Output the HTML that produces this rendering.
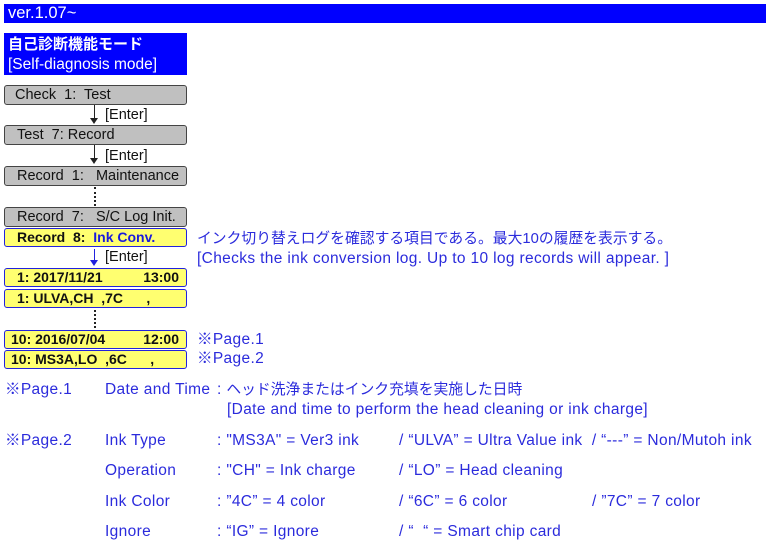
<!DOCTYPE html>
<html><head><meta charset="utf-8"><style>
body{margin:0;width:770px;height:545px;background:#fff;position:relative;overflow:hidden;font-family:"Liberation Sans","Noto Sans CJK JP",sans-serif;}
.a{position:absolute;white-space:nowrap;line-height:1;}
.b{color:#2b2bdc;font-size:15.5px;letter-spacing:0.35px;}
.j{font-size:14.8px;letter-spacing:0;}
.box{position:absolute;left:4px;width:181px;height:18px;border:1px solid #444;border-radius:3px;background:#c0c0c0;font-size:14.5px;line-height:18px;color:#111;box-sizing:content-box;}
.y{background:#ffff70;border:1.5px solid #2222dd;font-weight:bold;color:#1a1adc;height:17px;line-height:17px;font-size:14px;}
.arr{position:absolute;left:94px;width:1px;background:#222;}
.arrh{position:absolute;left:90px;width:0;height:0;border-left:4px solid transparent;border-right:4px solid transparent;border-top:6px solid #222;}
.dot{position:absolute;left:94px;width:0;border-left:2px dotted #222;}
.ent{position:absolute;left:105px;font-size:14.5px;color:#111;}
</style></head><body>
<div class="a" style="left:4px;top:4px;width:762px;height:19px;background:#0000ff;"></div>
<div class="a" style="left:8px;top:5px;color:#fff;font-size:16.5px;">ver.1.07~</div>
<div class="a" style="left:4px;top:33px;width:183px;height:42px;background:#0000ff;"></div>
<div class="a" style="left:8px;top:37px;color:#fff;font-size:15px;font-weight:bold;">自己診断機能モード</div>
<div class="a" style="left:8px;top:57px;color:#fff;font-size:15.5px;">[Self-diagnosis mode]</div>

<div class="box" style="top:85px;"><span style="margin-left:10px">Check&nbsp; 1:&nbsp; Test</span></div>
<div class="arr" style="top:105px;height:14px;"></div><div class="arrh" style="top:118px;"></div>
<div class="ent" style="top:107px;">[Enter]</div>
<div class="box" style="top:125px;"><span style="margin-left:12px">Test&nbsp; 7: Record</span></div>
<div class="arr" style="top:145px;height:14px;"></div><div class="arrh" style="top:158px;"></div>
<div class="ent" style="top:148px;">[Enter]</div>
<div class="box" style="top:166px;"><span style="margin-left:12px">Record&nbsp; 1:&nbsp;&nbsp; Maintenance</span></div>
<div class="dot" style="top:187px;height:19px;"></div>
<div class="box" style="top:207px;"><span style="margin-left:12px">Record&nbsp; 7:&nbsp;&nbsp; S/C Log Init.</span></div>
<div class="box y" style="top:228px;"><span style="margin-left:12px;color:#111">Record&nbsp; 8:</span>&nbsp; Ink Conv.</div>
<div class="arr" style="top:249px;height:12px;background:#2222dd"></div><div class="arrh" style="top:260px;border-top-color:#2222dd"></div>
<div class="ent b" style="top:249px;font-size:14.5px;letter-spacing:0">[Enter]</div>
<div class="box y" style="top:268px;color:#111;"><span style="margin-left:12px">1: 2017/11/21</span><span style="position:absolute;right:7px">13:00</span></div>
<div class="box y" style="top:289px;color:#111;"><span style="margin-left:12px">1: ULVA,CH&nbsp; ,7C&nbsp;&nbsp;&nbsp;&nbsp;&nbsp; ,</span></div>
<div class="dot" style="top:310px;height:18px;"></div>
<div class="box y" style="top:330px;color:#111;"><span style="margin-left:6px">10: 2016/07/04</span><span style="position:absolute;right:7px">12:00</span></div>
<div class="box y" style="top:350px;color:#111;"><span style="margin-left:6px">10: MS3A,LO&nbsp; ,6C&nbsp;&nbsp;&nbsp;&nbsp;&nbsp; ,</span></div>

<div class="a b j" style="left:197px;top:232px;">インク切り替えログを確認する項目である。最大10の履歴を表示する。</div>
<div class="a b" style="left:197px;top:251px;">[Checks the ink conversion log. Up to 10 log records will appear. ]</div>
<div class="a b" style="left:197px;top:332px;">※Page.1</div>
<div class="a b" style="left:197px;top:351px;">※Page.2</div>

<div class="a b" style="left:5px;top:382px;">※Page.1</div>
<div class="a b" style="left:105px;top:382px;">Date and Time</div>
<div class="a b" style="left:217px;top:382px;">: <span class="j">ヘッド洗浄またはインク充填を実施した日時</span></div>
<div class="a b" style="left:227px;top:402px;">[Date and time to perform the head cleaning or ink charge]</div>

<div class="a b" style="left:5px;top:433px;">※Page.2</div>
<div class="a b" style="left:105px;top:433px;">Ink Type</div>
<div class="a b" style="left:217px;top:433px;">: "MS3A" = Ver3 ink</div>
<div class="a b" style="left:399px;top:433px;">/ “ULVA” = Ultra Value ink&nbsp; / “---” = Non/Mutoh ink</div>
<div class="a b" style="left:105px;top:463px;">Operation</div>
<div class="a b" style="left:217px;top:463px;">: "CH" = Ink charge</div>
<div class="a b" style="left:399px;top:463px;">/ “LO” = Head cleaning</div>
<div class="a b" style="left:105px;top:494px;">Ink Color</div>
<div class="a b" style="left:217px;top:494px;">: ”4C” = 4 color</div>
<div class="a b" style="left:399px;top:494px;">/ “6C” = 6 color</div>
<div class="a b" style="left:592px;top:494px;">/ ”7C” = 7 color</div>
<div class="a b" style="left:105px;top:524px;">Ignore</div>
<div class="a b" style="left:217px;top:524px;">: “IG” = Ignore</div>
<div class="a b" style="left:399px;top:524px;">/ “&nbsp; “ = Smart chip card</div>
</body></html>
